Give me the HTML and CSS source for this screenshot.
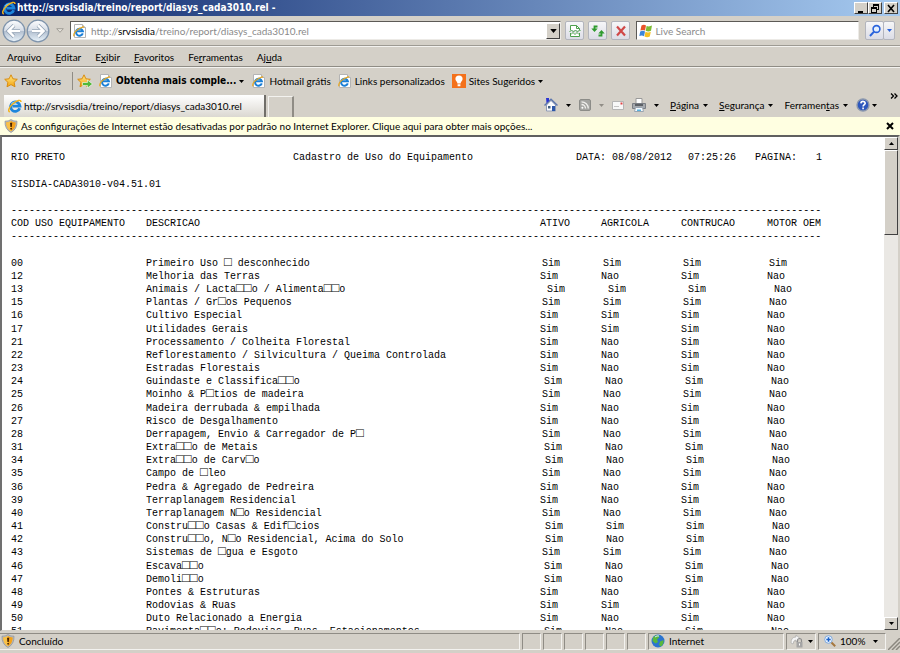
FILE: index.html
```html
<!DOCTYPE html>
<html lang="pt-BR">
<head>
    <meta charset="UTF-8">
    <meta name="viewport" content="width=device-width, initial-scale=1.0">
    <link rel="stylesheet" href="styles.css">
    <title>http://srvsisdia/treino/report/diasys_cada3010.rel</title>
</head>
<body>
    <!-- shared icons -->
    <svg class="defs" width="0" height="0">
        <defs>
            <linearGradient id="round" x1="0" y1="0" x2="0" y2="1">
                <stop offset="0" stop-color="#fdfdfe"/>
                <stop offset="0.48" stop-color="#d5dce6"/>
                <stop offset="0.52" stop-color="#b3c0d0"/>
                <stop offset="1" stop-color="#eaf4fb"/>
            </linearGradient>
            <linearGradient id="gold" x1="0" y1="0" x2="0" y2="1">
                <stop offset="0" stop-color="#ffe98a"/>
                <stop offset="1" stop-color="#f5a40c"/>
            </linearGradient>
            <symbol id="ie" viewBox="0 0 16 16">
                <path d="M13.4 10.6A5.4 5.4 0 1 1 13.7 8.2H5" fill="none" stroke="#1e86dc" stroke-width="3.2"/>
                <path d="M3.8 6.2Q5.6 3.6 8.6 3.4" fill="none" stroke="#8fd3fa" stroke-width="1.4"/>
                <path d="M2.2 14.6C-0.6 14.6 1 9.4 5.6 5.4S15 .2 14.8 3.4" fill="none" stroke="#f2b21b" stroke-width="1.7"/>
            </symbol>
            <symbol id="page" viewBox="0 0 14 14">
                <path d="M1.5.5h8l3 3v10h-11z" fill="#fff" stroke="#b4b4b4"/>
                <path d="M9.5.5v3h3" fill="#e4e4e4" stroke="#b4b4b4"/>
                <path d="M9.8 9.4A3.5 3.5 0 1 1 9.9 7.3H3.6" fill="none" stroke="#1b7fd6" stroke-width="2"/>
                <path d="M1 12.2C-.2 9.4 3.6 4.6 11 2.600" fill="none" stroke="#e9a820" stroke-width="1.2"/>
            </symbol>
            <symbol id="star" viewBox="0 0 14 14">
                <path d="M7 .8l1.9 4 4.4.5-3.2 3 .9 4.5L7 10.6l-4 2.2.9-4.5-3.2-3 4.4-.5z" fill="url(#gold)" stroke="#d98c10"/>
            </symbol>
            <symbol id="shield" viewBox="0 0 14 14">
                <path d="M7 .6Q9.6 2.4 13 2.2 13.4 10 7 13.5.6 10 1 2.2 4.4 2.4 7 .6z" fill="#b9bcc0" stroke="#8c8f94" stroke-width=".7"/>
                <path d="M7 2Q9 3.4 11.8 3.4 11.8 9.4 7 12.2 2.2 9.4 2.2 3.4 5 3.4 7 2z" fill="#f4a21a"/>
                <path d="M7 2Q5 3.4 2.2 3.4 2.2 9.4 7 12.2z" fill="#f9c24a"/>
                <path d="M6 3.8h2.2L7.8 8H6.4zM6.3 9h1.6v1.6H6.3z" fill="#4a2500"/>
            </symbol>
            <symbol id="down" viewBox="0 0 5 3"><path d="M0 0h5L2.5 3z" fill="currentColor"/></symbol>
        </defs>
    </svg>

    <header class="titlebar">
        <svg class="i14"><use href="#ie"/></svg>
        <h1>http://srvsisdia/treino/report/diasys_cada3010.rel -</h1>
        <div class="window-buttons">
            <button aria-label="Minimizar"><svg viewBox="0 0 10 9"><path d="M2 7h5v2H2z"/></svg></button>
            <button aria-label="Restaurar"><svg viewBox="0 0 10 9"><path d="M3 0h6v6H7V5h1V2H4v1H3zM1 3h6v6H1zM2 5v3h4V5z" fill-rule="evenodd"/></svg></button>
            <button class="close" aria-label="Fechar"><svg viewBox="0 0 10 9"><path d="M2 1l6 7M8 1L2 8" stroke="#000" stroke-width="1.6"/></svg></button>
        </div>
    </header>

    <div class="navbar">
        <button class="round" aria-label="Voltar"><svg viewBox="0 0 24 24"><circle cx="12" cy="12" r="10.8" fill="url(#round)" stroke="#7e93ab" stroke-width="1.3"/><path d="M12 6.4L6.4 12l5.6 5.6M7 12h11" fill="none" stroke="#8b9cb0" stroke-width="3.8"/><path d="M12 6.4L6.4 12l5.6 5.6M7 12h11" fill="none" stroke="#fff" stroke-width="2.4"/></svg></button>
        <button class="round" aria-label="Avançar"><svg viewBox="0 0 24 24"><circle cx="12" cy="12" r="10.8" fill="url(#round)" stroke="#7e93ab" stroke-width="1.3"/><path d="M12 6.4l5.6 5.6-5.6 5.6M17 12H6" fill="none" stroke="#8b9cb0" stroke-width="3.8"/><path d="M12 6.4l5.6 5.6-5.6 5.6M17 12H6" fill="none" stroke="#fff" stroke-width="2.4"/></svg></button>
        <button class="history" aria-label="Páginas recentes"><svg viewBox="0 0 8 5"><path d="M.7.7h6.6L4 4.3z" fill="#e6e3dd" stroke="#a19e97"/></svg></button>
        <div class="field address">
            <svg class="i14"><use href="#page"/></svg>
            <a href="#">http://<b>srvsisdia</b>/treino/report/diasys_cada3010.rel</a>
            <button class="drop" aria-label="Endereços"><svg viewBox="0 0 5 3"><use href="#down"/></svg></button>
        </div>
        <button class="tool" aria-label="Modo de compatibilidade"><svg viewBox="0 0 14 14"><path d="M2.5 6V1.5h6l3 3V6M2.5 9v3.500h9V9" fill="#fff" stroke="#4da04d"/><path d="M8.500 1.500v3h3M1.500 8l2-2 2 2 2-2 2 2 2-2 1 1M3 10.500l2-2 2 2 2-2 2 2" fill="none" stroke="#4da04d"/></svg></button>
        <button class="tool" aria-label="Atualizar"><svg viewBox="0 0 14 14"><path d="M3.500 5V2.500h3M10.500 9v2.500h-3" fill="none" stroke="#2f9b2f" stroke-width="1.800"/><path d="M.300 4.500h6.400L3.500 8zM7.300 9.500h6.400L10.500 6z" fill="#2f9b2f"/></svg></button>
        <button class="tool" aria-label="Parar"><svg viewBox="0 0 14 14"><path d="M3 2.500l8 9M11 2.500l-8 9" stroke="#d04848" stroke-width="2.200"/></svg></button>
        <div class="field search">
            <svg class="i14" viewBox="0 0 14 14"><path d="M2.500 1.500Q5 .200 7 1.500L6 6.500Q4 5.400 1.400 6.600z" fill="#e8532a"/><path d="M7.600 1.900Q10 3 13 1.600L12 6.800Q9.400 8 6.700 6.800z" fill="#7dbb34"/><path d="M1.200 7.500Q4 6.200 6 7.400L5 12.200Q3 11 .300 12z" fill="#3d86d8"/><path d="M6.500 7.800Q9 9 11.800 7.800L10.800 12.600Q8 14 5.500 12.500z" fill="#f6c021"/></svg>
            <input type="text" placeholder="Live Search" aria-label="Live Search">
        </div>
        <div class="search-buttons">
            <button class="tool" aria-label="Pesquisar"><svg viewBox="0 0 14 14"><circle cx="8.500" cy="5" r="3.400" fill="#e4f0ff" stroke="#2a63dc" stroke-width="1.600"/><path d="M6 7.600L2 12" stroke="#2a63dc" stroke-width="2"/></svg></button>
            <button class="tool narrow" aria-label="Opções de pesquisa"><svg class="arrow"><use href="#down"/></svg></button>
        </div>
    </div>

    <nav class="menu">
        <a href="#">Arquivo</a>
        <a href="#"><u>E</u>ditar</a>
        <a href="#">E<u>x</u>ibir</a>
        <a href="#"><u>F</u>avoritos</a>
        <a href="#">Fe<u>r</u>ramentas</a>
        <a href="#">Aj<u>u</u>da</a>
    </nav>

    <div class="favorites">
        <button class="fav-main"><svg class="i14"><use href="#star"/></svg>Favoritos</button>
        <button class="add" aria-label="Adicionar a favoritos"><svg viewBox="0 0 16 14"><use href="#star" width="14" height="14"/><path d="M5.500 8.500h5V6l5 4-5 4v-2.500h-5z" fill="#51b83a" stroke="#fff" stroke-width=".600"/></svg></button>
        <a class="more" href="#"><svg class="i14"><use href="#page"/></svg><b>Obtenha mais comple...</b><svg class="arrow"><use href="#down"/></svg></a>
        <a class="hotmail" href="#"><svg class="i14"><use href="#page"/></svg>Hotmail grátis</a>
        <a class="links" href="#"><svg class="i14"><use href="#page"/></svg>Links personalizados</a>
        <a class="sites" href="#"><svg class="i14" viewBox="0 0 14 14"><path fill="#f4711b" d="M0 0h14v14H0z"/><path d="M7 1.500a3.600 3.600 0 0 1 3.600 3.600C10.600 7 8.600 8 8.600 9.500H5.400C5.400 8 3.400 7 3.400 5.100A3.600 3.600 0 0 1 7 1.500zM5.600 10.200h2.800v2H5.600z" fill="#fff"/></svg>Sites Sugeridos<svg class="arrow"><use href="#down"/></svg></a>
    </div>

    <div class="tabs">
        <a class="tab" href="#"><svg class="i14"><use href="#ie"/></svg>http://srvsisdia/treino/report/diasys_cada3010.rel</a>
        <button class="new-tab" aria-label="Nova guia"></button>
        <div class="commands">
            <button class="home" aria-label="Home"><svg class="i14" viewBox="0 0 14 14"><path d="M2.500 7v6h9V7L7 2.500z" fill="#fafbff" stroke="#8f9bb5"/><path d="M.500 7.500L7 1.300l6.500 6.200" fill="none" stroke="#5d76ad" stroke-width="1.500"/><path d="M2 0h3v3L2.500 5z" fill="#2b34d2"/><path d="M8 8h3v5H8z" fill="#2c56a8"/><path d="M4 8h2.500v2.500H4z" fill="#44607e"/></svg><svg class="arrow"><use href="#down"/></svg></button>
            <button class="feed" aria-label="Feeds"><svg class="i12" viewBox="0 0 12 12"><rect x=".500" y=".500" width="11" height="11" rx="1.500" fill="#a5a5a2" stroke="#8c8c88"/><path d="M2.500 5.500a4 4 0 0 1 4 4M2.500 2.800a6.800 6.800 0 0 1 6.800 6.800" fill="none" stroke="#f1f0ee" stroke-width="1.300"/><circle cx="3.400" cy="8.700" r="1" fill="#fff"/></svg><svg class="arrow dim"><use href="#down"/></svg></button>
            <button class="mail" aria-label="Ler email"><svg class="i12" viewBox="0 0 12 10"><path d="M.500 1.500h11v8H.500z" fill="#f8f8f8" stroke="#b5b5b5"/><path d="M8.500 2.500h2v2h-2z" fill="#e04444"/><path d="M2 6.500h5" stroke="#c5c5c5"/></svg></button>
            <button class="print" aria-label="Imprimir"><svg class="i14" viewBox="0 0 14 14"><path d="M4 .500h6v5H4z" fill="#fff" stroke="#9a9a9a"/><path d="M.500 5.500h13v5H.500z" fill="#a5a9ae" stroke="#7a7e84"/><path d="M3 6h8v2H3z" fill="#5d6167"/><path d="M3.500 9.500h7l1 4h-9z" fill="#f6faff" stroke="#9aa5b0"/><path d="M5 11.500h4v1.500H5z" fill="#59b3df"/></svg><svg class="arrow"><use href="#down"/></svg></button>
            <button class="label"><span><u>P</u>ágina</span><svg class="arrow"><use href="#down"/></svg></button>
            <button class="label"><span><u>S</u>egurança</span><svg class="arrow"><use href="#down"/></svg></button>
            <button class="label"><span>Ferramen<u>t</u>as</span><svg class="arrow"><use href="#down"/></svg></button>
            <button class="help" aria-label="Ajuda"><svg class="i14" viewBox="0 0 14 14"><circle cx="7" cy="7" r="6" fill="#2d57bd" stroke="#8b97ad" stroke-width="1.400"/><path d="M4.900 5.400Q5 3.400 7 3.400T9.200 5.200C9.200 6.600 7.100 6.600 7.100 8.500M7.100 9.600v1.600" fill="none" stroke="#fff" stroke-width="1.600"/></svg><svg class="arrow"><use href="#down"/></svg></button>
            <button class="chevron" aria-label="Mais"><svg viewBox="0 0 8 6"><path d="M1 .500L3.500 3 1 5.500M4.500 .500L7 3 4.500 5.500" fill="none" stroke="#000" stroke-width="1.300"/></svg></button>
        </div>
    </div>

    <div class="infobar">
        <svg class="i14"><use href="#shield"/></svg>
        <a href="#">As configurações de Internet estão desativadas por padrão no Internet Explorer. Clique aqui para obter mais opções...</a>
        <button aria-label="Fechar aviso"><svg viewBox="0 0 8 8"><path d="M1 1l6 6M7 1L1 7" stroke="#000" stroke-width="2"/></svg></button>
    </div>

    <main class="view">
        <div class="report">
            <div class="report-head">
                <span>RIO PRETO</span>
                <span>Cadastro de Uso do Equipamento</span>
                <span>DATA: 08/08/2012</span>
                <span>07:25:26</span>
                <span>PAGINA:</span>
                <span class="num">1</span>
            </div>
            <p>SISDIA-CADA3010-v04.51.01</p>
            <div class="rule">---------------------------------------------------------------------------------------------------------------------------------------</div>
            <table>
                <colgroup><col class="cod"><col class="desc"><col class="ativo"><col class="agri"><col class="cont"><col class="oem"></colgroup>
                <thead>
                    <tr><th>COD USO EQUIPAMENTO</th><th>DESCRICAO</th><th>ATIVO</th><th>AGRICOLA</th><th>CONTRUCAO</th><th>MOTOR OEM</th></tr>
                    <tr><td class="rule" colspan="6">---------------------------------------------------------------------------------------------------------------------------------------</td></tr>
                </thead>
                <!-- s1..s4: unknown characters in the description push the flags right -->
                <tbody>
                    <tr class="s1"><td>00</td><td>Primeiro Uso <i>□</i> desconhecido</td><td>Sim</td><td>Sim</td><td>Sim</td><td>Sim</td></tr>
                    <tr><td>12</td><td>Melhoria das Terras</td><td>Sim</td><td>Nao</td><td>Sim</td><td>Nao</td></tr>
                    <tr class="s4"><td>13</td><td>Animais / Lacta<i>□□</i>o / Alimenta<i>□□</i>o</td><td>Sim</td><td>Sim</td><td>Sim</td><td>Nao</td></tr>
                    <tr class="s1"><td>15</td><td>Plantas / Gr<i>□</i>os Pequenos</td><td>Sim</td><td>Sim</td><td>Sim</td><td>Nao</td></tr>
                    <tr><td>16</td><td>Cultivo Especial</td><td>Sim</td><td>Sim</td><td>Sim</td><td>Nao</td></tr>
                    <tr><td>17</td><td>Utilidades Gerais</td><td>Sim</td><td>Sim</td><td>Sim</td><td>Nao</td></tr>
                    <tr><td>21</td><td>Processamento / Colheita Florestal</td><td>Sim</td><td>Nao</td><td>Sim</td><td>Nao</td></tr>
                    <tr><td>22</td><td>Reflorestamento / Silvicultura / Queima Controlada</td><td>Sim</td><td>Nao</td><td>Sim</td><td>Nao</td></tr>
                    <tr><td>23</td><td>Estradas Florestais</td><td>Sim</td><td>Nao</td><td>Sim</td><td>Nao</td></tr>
                    <tr class="s2"><td>24</td><td>Guindaste e Classifica<i>□□</i>o</td><td>Sim</td><td>Nao</td><td>Sim</td><td>Nao</td></tr>
                    <tr class="s1"><td>25</td><td>Moinho &amp; P<i>□</i>tios de madeira</td><td>Sim</td><td>Nao</td><td>Sim</td><td>Nao</td></tr>
                    <tr><td>26</td><td>Madeira derrubada &amp; empilhada</td><td>Sim</td><td>Nao</td><td>Sim</td><td>Nao</td></tr>
                    <tr><td>27</td><td>Risco de Desgalhamento</td><td>Sim</td><td>Nao</td><td>Sim</td><td>Nao</td></tr>
                    <tr class="s1"><td>28</td><td>Derrapagem, Envio &amp; Carregador de P<i>□</i></td><td>Sim</td><td>Nao</td><td>Sim</td><td>Nao</td></tr>
                    <tr class="s2"><td>31</td><td>Extra<i>□□</i>o de Metais</td><td>Sim</td><td>Nao</td><td>Sim</td><td>Nao</td></tr>
                    <tr class="s3"><td>34</td><td>Extra<i>□□</i>o de Carv<i>□</i>o</td><td>Sim</td><td>Nao</td><td>Sim</td><td>Nao</td></tr>
                    <tr class="s1"><td>35</td><td>Campo de <i>□</i>leo</td><td>Sim</td><td>Nao</td><td>Sim</td><td>Nao</td></tr>
                    <tr><td>36</td><td>Pedra &amp; Agregado de Pedreira</td><td>Sim</td><td>Nao</td><td>Sim</td><td>Nao</td></tr>
                    <tr><td>39</td><td>Terraplanagem Residencial</td><td>Sim</td><td>Nao</td><td>Sim</td><td>Nao</td></tr>
                    <tr class="s1"><td>40</td><td>Terraplanagem N<i>□</i>o Residencial</td><td>Sim</td><td>Nao</td><td>Sim</td><td>Nao</td></tr>
                    <tr class="s3"><td>41</td><td>Constru<i>□□</i>o Casas &amp; Edif<i>□</i>cios</td><td>Sim</td><td>Sim</td><td>Sim</td><td>Nao</td></tr>
                    <tr class="s3"><td>42</td><td>Constru<i>□□</i>o, N<i>□</i>o Residencial, Acima do Solo</td><td>Sim</td><td>Nao</td><td>Sim</td><td>Nao</td></tr>
                    <tr class="s1"><td>43</td><td>Sistemas de <i>□</i>gua e Esgoto</td><td>Sim</td><td>Sim</td><td>Sim</td><td>Nao</td></tr>
                    <tr class="s2"><td>46</td><td>Escava<i>□□</i>o</td><td>Sim</td><td>Nao</td><td>Sim</td><td>Nao</td></tr>
                    <tr class="s2"><td>47</td><td>Demoli<i>□□</i>o</td><td>Sim</td><td>Nao</td><td>Sim</td><td>Nao</td></tr>
                    <tr><td>48</td><td>Pontes &amp; Estruturas</td><td>Sim</td><td>Nao</td><td>Sim</td><td>Nao</td></tr>
                    <tr><td>49</td><td>Rodovias &amp; Ruas</td><td>Sim</td><td>Sim</td><td>Sim</td><td>Nao</td></tr>
                    <tr><td>50</td><td>Duto Relacionado a Energia</td><td>Sim</td><td>Nao</td><td>Sim</td><td>Nao</td></tr>
                    <tr class="s2"><td>51</td><td>Pavimenta<i>□□</i>o: Rodovias, Ruas, Estacionamentos</td><td>Sim</td><td>Nao</td><td>Sim</td><td>Nao</td></tr>
                </tbody>
            </table>
        </div>
        <div class="scrollbar">
            <button class="up" aria-label="Rolar para cima"><svg class="arrow"><use href="#down"/></svg></button>
            <div class="thumb"></div>
            <button aria-label="Rolar para baixo"><svg class="arrow"><use href="#down"/></svg></button>
        </div>
    </main>

    <footer class="status">
        <div class="pane text"><svg class="i14"><use href="#shield"/></svg>Concluído</div>
        <div class="pane"></div>
        <div class="pane"></div>
        <div class="pane"></div>
        <div class="pane"></div>
        <div class="pane"></div>
        <div class="pane"></div>
        <div class="pane zone"><svg class="i14" viewBox="0 0 14 14"><circle cx="7" cy="7" r="6.500" fill="#2b74cf"/><path d="M2 3.500Q4 .800 7 1L8.500 3 6 5.500 7 8 4.500 9.500 1.500 7zM9 7.500l3.500-1.500Q13 10 10 12.500L8 11z" fill="#59b83c"/><path d="M4 3Q6 1.400 8 2" stroke="#d9ecff" fill="none"/></svg>Internet</div>
        <button class="pane protect" aria-label="Modo protegido"><svg class="i14" viewBox="0 0 14 14"><path d="M1 9Q1 3 6 3V1l4 3.500L6 8V6Q3.500 6 3 10z" fill="#f5f5f5" stroke="#aaa" stroke-width=".700"/><path d="M7.500 8V6.500a2 2 0 0 1 4 0V8" fill="none" stroke="#8e8e8e" stroke-width="1.200"/><path d="M6.500 8h6v5.500h-6z" fill="#a5a5a5"/><path d="M9 9.500h1v2H9z" fill="#fff"/></svg><svg class="arrow"><use href="#down"/></svg></button>
        <button class="pane zoom"><svg class="i12" viewBox="0 0 12 12"><circle cx="4.500" cy="4.500" r="3.800" fill="#eaf4ff" stroke="#7fa9dd"/><path d="M4.500 2.300v4.400M2.300 4.500h4.400" stroke="#1d62c9" stroke-width="1.500"/><path d="M7.500 7.500l3.700 3.700" stroke="#a5773f" stroke-width="2"/></svg><span>100%</span><svg class="arrow"><use href="#down"/></svg></button>
        <svg class="grip" viewBox="0 0 12 12"><path d="M0 12L12 0M4 12l8-8M8 12l4-4" stroke="#8a877f" stroke-width="1.500"/></svg>
    </footer>
</body>
</html>
```

FILE: styles.css
```css
*{
    box-sizing: border-box;
}
body{
    margin: 0;
    height: 100vh;
    display: flex;
    flex-direction: column;
    overflow: hidden;
    background-color: #d4d0c8;
    color: #000;
    font-family: Lato, "DejaVu Sans Condensed", sans-serif;
    font-size: 10px;
    line-height: 14px;
}
button{
    display: flex;
    align-items: center;
    justify-content: center;
    padding: 0;
    border: none;
    background: none;
    color: inherit;
    font: inherit;
    white-space: nowrap;
}
a{
    color: inherit;
    text-decoration: none;
    white-space: nowrap;
}
svg{
    flex: none;
    display: block;
}
.defs{
    position: absolute;
}
.i14{
    width: 14px;
    height: 14px;
}
.i12{
    width: 12px;
    height: 12px;
}
.arrow{
    width: 5px;
    height: 3px;
}
.dim{
    color: #908d86;
}

/* title bar */
.titlebar{
    flex: none;
    display: flex;
    align-items: center;
    height: 16px;
    padding: 0 2px;
    gap: 1px;
    background: linear-gradient(to right, #0a246a, #a6caf0);
}
.titlebar h1, .more b{
    font-family: "DejaVu Sans Condensed", "DejaVu Sans", sans-serif;
    font-size: 10px;
    font-weight: bold;
}
.titlebar h1{
    flex: 1;
    margin: 0;
    color: #fff;
    white-space: nowrap;
}
.window-buttons{
    display: flex;
}
.window-buttons button, .drop, .scrollbar button, .thumb{
    background-color: #d4d0c8;
    border: 1px solid;
    border-color: #fff #404040 #404040 #fff;
}
.window-buttons button{
    width: 14px;
    height: 12px;
}
.window-buttons svg{
    width: 10px;
    height: 9px;
}
.window-buttons .close{
    margin-left: 2px;
}

/* address and search */
.navbar{
    flex: none;
    display: flex;
    align-items: center;
    height: 30px;
    padding: 0 5px 0 2px;
    border-bottom: 1px solid #9d9a93;
}
.round, .round svg{
    width: 24px;
    height: 24px;
}
.history{
    width: 20px;
}
.history svg{
    width: 8px;
    height: 5px;
}
.field{
    display: flex;
    align-items: center;
    height: 19px;
    gap: 4px;
    padding-left: 2px;
    background-color: #fff;
    border: 1px solid;
    border-color: #5c5a56 #eceae6 #eceae6 #5c5a56;
    color: #8a8a8a;
}
.address{
    flex: 493;
}
.address a{
    flex: 1;
}
.address b{
    color: #000;
    font-weight: normal;
}
.drop{
    width: 14px;
    height: 16px;
    color: #000;
}
.drop svg{
    width: 7px;
    height: 4px;
}
.tool{
    width: 19px;
    height: 19px;
    margin-left: 4px;
    border: 1px solid #b3b5bd;
    border-radius: 2px;
    background: linear-gradient(#f6f6f8, #dcdde6);
}
.tool svg{
    width: 14px;
    height: 14px;
}
.search{
    flex: 221;
    margin-left: 6px;
    gap: 2px;
}
.search input{
    flex: 1;
    min-width: 0;
    padding: 0;
    border: none;
    outline: none;
    background: none;
    font: inherit;
}
.search input::placeholder{
    color: #8a8a8a;
}
.search-buttons{
    display: flex;
    margin-left: 2px;
}
.tool.narrow{
    width: 12px;
    margin-left: -1px;
    color: #2a63dc;
}
.tool .arrow{
    width: 5px;
    height: 3px;
}

/* menu */
.menu{
    flex: none;
    display: flex;
    align-items: center;
    gap: 14px;
    height: 21px;
    padding-left: 7px;
    border-top: 1px solid #f3f2ef;
    border-bottom: 1px solid #8f8c85;
}

/* favorites */
.favorites{
    flex: none;
    display: flex;
    align-items: center;
    height: 27px;
    padding-left: 4px;
    border-top: 1px solid #f3f2ef;
}
.favorites a, .fav-main{
    display: flex;
    align-items: center;
    gap: 3px;
}
.fav-main{
    height: 18px;
    padding-right: 11px;
    border-right: 1px solid #8f8c85;
}
.add{
    margin: 0 6px 0 4px;
}
.add svg{
    width: 16px;
    height: 14px;
}
.favorites .more{
    margin-right: 8px;
}
.favorites .hotmail, .favorites .links{
    margin-right: 7px;
}

/* tabs and command bar */
.tabs{
    flex: none;
    display: flex;
    align-items: flex-end;
    height: 23px;
    padding: 0 2px 0 4px;
}
.tab{
    display: flex;
    align-items: center;
    gap: 2px;
    width: 262px;
    height: 22px;
    padding-left: 4px;
    background: linear-gradient(#fff, #dbd8d1);
    border-right: 2px solid #706e69;
}
.new-tab{
    width: 26px;
    height: 21px;
    margin-left: 2px;
    border-top: 1px solid #f3f2ef;
    border-left: 1px solid #f3f2ef;
    border-right: 2px solid #8f8c85;
}
.commands{
    flex: 1;
    display: flex;
    align-items: center;
    justify-content: flex-end;
    gap: 8px;
    height: 24px;
}
.commands .label{
    gap: 4px;
    margin-left: 3px;
}
.commands .home, .commands .feed, .commands .print{
    gap: 8px;
}
.commands .help{
    gap: 2px;
}
.commands .chevron{
    align-self: flex-start;
    margin-left: 5px;
}
.chevron svg{
    width: 8px;
    height: 6px;
}

/* information bar */
.infobar{
    flex: none;
    display: flex;
    align-items: center;
    gap: 3px;
    height: 18px;
    padding: 0 6px 0 4px;
    background-color: #ffffe1;
}
.infobar a{
    flex: 1;
}
.infobar button svg{
    width: 8px;
    height: 8px;
}

/* report */
.view{
    flex: 1;
    min-height: 0;
    display: flex;
    background-color: #fff;
    border-style: solid;
    border-width: 2px 2px 1px 2px;
    border-color: #606060 #d4d0c8 #d4d0c8 #707070;
}
.report{
    flex: 1;
    min-width: 0;
    overflow: hidden;
    padding: 14px 0 0 9px;
    font-family: "Liberation Mono", monospace;
    font-size: 10px;
    line-height: 13px;
    white-space: nowrap;
}
.report-head{
    display: grid;
    grid-template-columns: 282px 283px 112px 67px 46px 21px;
}
.num{
    text-align: right;
}
.report p{
    margin: 14px 0 13px;
}
.report table{
    border-collapse: collapse;
    table-layout: fixed;
    width: 811px;
}
.report th, .report td{
    padding: 0;
    height: 13px;
    text-align: left;
    font-weight: normal;
}
.report tbody::before{
    content: "";
    display: block;
    height: 14px;
}
.report tbody tr:nth-child(6n) td{
    height: 14px;
}
.report i{
    font-size: 13px;
    font-style: normal;
    line-height: 10px;
}
.cod{
    width: 135px;
}
.desc{
    width: 394px;
}
.ativo{
    width: 61px;
}
.agri{
    width: 80px;
}
.cont{
    width: 86px;
}
.s1 td:nth-child(n+3){
    padding-left: 2px;
}
.s2 td:nth-child(n+3){
    padding-left: 4px;
}
.s3 td:nth-child(n+3){
    padding-left: 5px;
}
.s4 td:nth-child(n+3){
    padding-left: 7px;
}

/* scrollbar */
.scrollbar{
    flex: none;
    display: flex;
    flex-direction: column;
    width: 14px;
    background-color: #eae8e4;
}
.scrollbar button{
    height: 13px;
}
.up svg{
    transform: rotate(180deg);
}
.thumb{
    height: 85px;
    margin-bottom: auto;
}

/* status bar */
.status{
    flex: none;
    display: flex;
    align-items: center;
    gap: 2px;
    height: 22px;
    padding: 1px 0 3px;
}
.pane{
    display: flex;
    align-items: center;
    justify-content: flex-start;
    gap: 4px;
    width: 19px;
    height: 17px;
    border: 1px solid;
    border-color: #8f8c85 #f3f2ef #f3f2ef #8f8c85;
}
.pane.text{
    flex: 1;
    padding-left: 1px;
    border-left: none;
}
.zone{
    width: 136px;
    padding-left: 2px;
}
.protect{
    width: 30px;
    padding-left: 3px;
}
.zoom{
    width: 68px;
    padding: 0 7px 0 5px;
}
.zoom span{
    flex: 1;
    text-align: left;
}
.grip{
    width: 12px;
    height: 12px;
    align-self: flex-end;
}
```
